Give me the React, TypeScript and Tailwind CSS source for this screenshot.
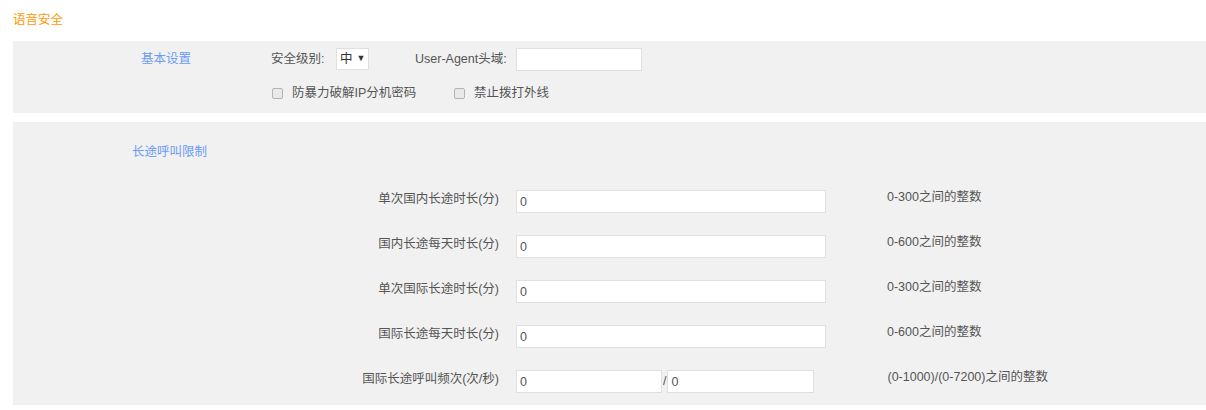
import React from "react";

const font = { fontFamily: '"Liberation Sans", "Noto Sans CJK SC", sans-serif' };

type Row = { label: string; hint: string; pair?: boolean };

const rows: Row[] = [
    { label: "单次国内长途时长(分)", hint: "0-300之间的整数" },
    { label: "国内长途每天时长(分)", hint: "0-600之间的整数" },
    { label: "单次国际长途时长(分)", hint: "0-300之间的整数" },
    { label: "国际长途每天时长(分)", hint: "0-600之间的整数" },
    { label: "国际长途呼叫频次(次/秒)", hint: "(0-1000)/(0-7200)之间的整数", pair: true },
];

function TextBox({ value, className }: { value?: string; className: string }) {
    return (
        <input
            readOnly
            value={value ?? ""}
            className={`h-[23px] border border-[#e0e0e0] bg-white px-[3px] text-[12.5px] text-[#555] outline-none ${className}`}
            style={font}
        />
    );
}

function Check({ label }: { label: string }) {
    return (
        <div className="flex items-center">
            <span className="ml-[1px] h-[11px] w-[11px] rounded-[2px] border border-[#b4b4b4] bg-[#e9e9e9]" />
            <span className="ml-[9px]">{label}</span>
        </div>
    );
}

export default function App() {
    return (
        <div className="min-h-[410px] bg-white text-[12.5px] text-[#555]" style={font}>
            <div className="pl-[13px] pt-[11px] leading-[18px] text-[#ff9a00]">语音安全</div>

            {/* 基本设置 */}
            <div className="ml-[13px] mt-[12px] flex bg-[#f1f1f1] pt-[6px] pb-[11px]">
                <div className="flex h-[24px] w-[258px] items-center pl-[128px] text-[#6b9cf5]">基本设置</div>
                <div className="flex flex-col">
                    <div className="flex h-[24px] items-center">
                        <span className="w-[65px]">安全级别:</span>
                        <div className="flex h-[22px] w-[33px] items-center border border-[#e0e0e0] bg-white pl-[3px] text-[#333]">
                            <span>中</span>
                            <span className="ml-[4px] text-[9px]">▼</span>
                        </div>
                        <span className="ml-[46px] w-[101px]">User-Agent头域:</span>
                        <TextBox className="w-[126px]" />
                    </div>
                    <div className="mt-[13px] flex h-[18px] items-center">
                        <div className="w-[182px]">
                            <Check label="防暴力破解IP分机密码" />
                        </div>
                        <Check label="禁止拨打外线" />
                    </div>
                </div>
            </div>

            {/* 长途呼叫限制 */}
            <div className="ml-[13px] mt-[9px] bg-[#f1f1f1] pt-[21px] pb-[12px]">
                <div className="pl-[119px] leading-[18px] text-[#6b9cf5]">长途呼叫限制</div>
                <div className="mt-[29px] flex flex-col gap-[22px]">
                    {rows.map((r) => (
                        <div key={r.label} className="flex h-[23px] items-start">
                            <span className="w-[486px] text-right leading-[18px]">{r.label}</span>
                            {r.pair ? (
                                <div className="ml-[17px] flex items-center">
                                    <TextBox value="0" className="w-[146px]" />
                                    <span className="mx-[1px]">/</span>
                                    <TextBox value="0" className="w-[147px]" />
                                </div>
                            ) : (
                                <TextBox value="0" className="ml-[17px] w-[310px]" />
                            )}
                            <span className={`${r.pair ? "ml-[73px]" : "ml-[61px]"} leading-[14px]`}>{r.hint}</span>
                        </div>
                    ))}
                </div>
            </div>
        </div>
    );
}
